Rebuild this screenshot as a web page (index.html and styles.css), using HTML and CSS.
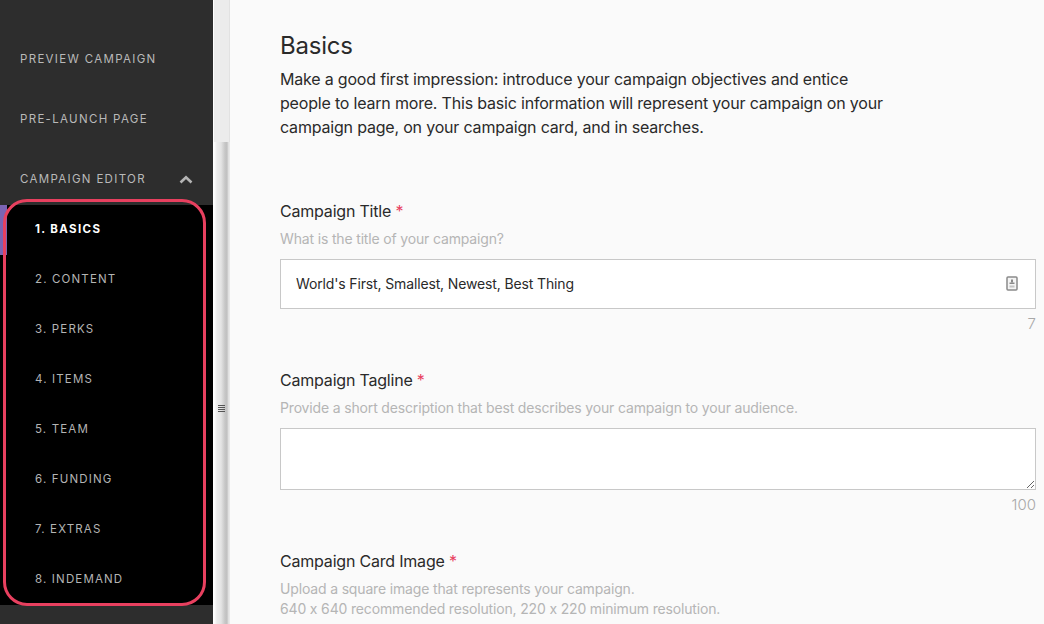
FILE: index.html
```html
<!DOCTYPE html>
<html lang="en">
<head>
<meta charset="utf-8">
<title>Campaign Editor</title>
<link rel="stylesheet" href="styles.css">
</head>
<body>
<div class="app">
  <aside class="side">
    <div class="side-top">
      <a class="nav-item">PREVIEW CAMPAIGN</a>
      <a class="nav-item">PRE-LAUNCH PAGE</a>
      <a class="nav-item nav-open">CAMPAIGN EDITOR
        <svg class="chev" width="14" height="9" viewBox="0 0 14 9"><path d="M1.5 7.5 7 2.2l5.500 5.300" fill="none" stroke="#b4b4b4" stroke-width="2.600"/></svg>
      </a>
    </div>
    <ul class="sub">
      <li class="sub-item active">1. BASICS</li>
      <li class="sub-item">2. CONTENT</li>
      <li class="sub-item">3. PERKS</li>
      <li class="sub-item">4. ITEMS</li>
      <li class="sub-item">5. TEAM</li>
      <li class="sub-item">6. FUNDING</li>
      <li class="sub-item">7. EXTRAS</li>
      <li class="sub-item">8. INDEMAND</li>
    </ul>
    <div class="highlight"></div>
  </aside>
  <div class="split">
    <div class="split-top"></div>
    <div class="split-track"></div>
    <div class="grip"><i></i><i></i><i></i><i></i></div>
  </div>
  <main class="main">
    <h1 class="title">Basics</h1>
    <p class="intro">Make a good first impression: introduce your campaign objectives and entice people to learn more. This basic information will represent your campaign on your campaign page, on your campaign card, and in searches.</p>

    <section class="field first">
      <label class="label">Campaign Title <span class="req">*</span></label>
      <p class="hint">What is the title of your campaign?</p>
      <div class="input-wrap">
        <input class="input" type="text" value="World's First, Smallest, Newest, Best Thing">
        <svg class="pass" width="12" height="15" viewBox="0 0 12 15"><rect x="1" y="1" width="10" height="13" rx="1" fill="#f4f4f4" stroke="#8a8a8a" stroke-width="1.500"/><rect x="5" y="3.500" width="2" height="3" fill="#8a8a8a"/><rect x="3.500" y="6.500" width="5" height="1.500" fill="#8a8a8a"/><rect x="3.500" y="9.500" width="5" height="2" fill="#c4c4c4"/></svg>
      </div>
      <div class="count">7</div>
    </section>

    <section class="field">
      <label class="label">Campaign Tagline <span class="req">*</span></label>
      <p class="hint">Provide a short description that best describes your campaign to your audience.</p>
      <textarea class="area"></textarea>
      <div class="count">100</div>
    </section>

    <section class="field">
      <label class="label">Campaign Card Image <span class="req">*</span></label>
      <p class="hint">Upload a square image that represents your campaign.<br>640 x 640 recommended resolution, 220 x 220 minimum resolution.</p>
    </section>
  </main>
</div>
</body>
</html>
```
FILE: styles.css
```css
* { box-sizing: border-box; }
html, body { margin: 0; height: 100%; overflow: hidden; }
body { font-family: "Inter", "Liberation Sans", sans-serif; background: #fafafa; color: #2a2a2a; }
.app { display: flex; height: 624px; }

.side { position: relative; flex: 0 0 213px; background: #2d2d2d; padding-top: 28px; }
.side-top { display: flex; flex-direction: column; }
.nav-item { display: flex; align-items: center; justify-content: space-between; height: 60px; padding: 2px 20px 0; font-size: 11.500px; letter-spacing: 1.320px; color: #b9b9b9; }
.nav-open { height: 57px; padding-top: 5px; }
.sub { list-style: none; margin: 0; padding: 0; background: #000; }
.sub-item { display: flex; align-items: center; height: 50px; padding: 0 0 2px 35px; font-size: 11.500px; letter-spacing: 1.150px; color: #b4b4b4; }
.sub-item.active { color: #fff; font-weight: 700; letter-spacing: 1.370px; border-left: 7px solid #7b64b4; padding-left: 28px; }
.highlight { position: absolute; left: 3px; top: 199px; width: 203px; height: 407px; border: 3px solid #e8405f; border-radius: 24px; pointer-events: none; }

.split { position: relative; flex: 0 0 17px; display: flex; flex-direction: column; border-left: 1px solid #fff; }
.split-top { flex: 0 0 142px; background: #ececec; border-right: 1px solid #e2e2e2; }
.split-track { flex: 1; background: linear-gradient(90deg, #fff 0, #ececec 3px, #e4e4e4 7px, #c6c6c6 11px, #c0c0c0 13px, #d8d8d8 14px, #e8e8e8 15px); }
.grip { position: absolute; left: 4px; top: 405px; width: 7px; display: flex; flex-direction: column; gap: 1px; }
.grip i { display: block; height: 1px; background: #555; }

.main { flex: 1; min-width: 0; padding: 33px 8px 0 50px; background: #fafafa; }
.title { margin: 0; font-size: 24px; line-height: 26px; font-weight: 400; letter-spacing: -0.200px; color: #2a2a2a; }
.intro { margin: 8px 0 0; width: 610px; font-size: 16px; line-height: 24px; letter-spacing: -0.190px; color: #2a2a2a; }
.field { margin-top: 34px; }
.field.first { margin-top: 60px; }
.label { display: block; font-size: 16px; line-height: 24px; letter-spacing: -0.200px; color: #2a2a2a; }
.req { color: #e8405f; }
.hint { margin: 6px 0 0; font-size: 14px; line-height: 20px; letter-spacing: -0.160px; color: #b5b5b5; }
.input-wrap { position: relative; margin-top: 10px; }
.input { display: block; width: 100%; height: 50px; padding: 0 15px 2px; border: 1px solid #c8c8c8; background: #fff; font: 14px "Inter", "Liberation Sans", sans-serif; letter-spacing: -0.140px; color: #2a2a2a; border-radius: 0; outline: 0; }
.pass { position: absolute; right: 18px; top: 17px; }
.area { display: block; width: 100%; height: 62px; margin-top: 10px; padding: 10px 15px; border: 1px solid #c8c8c8; background: #fff; border-radius: 0; outline: 0; }
.count { margin-top: 5px; text-align: right; font-size: 15px; line-height: 20px; font-weight: 300; color: #a8a8a8; }
```
